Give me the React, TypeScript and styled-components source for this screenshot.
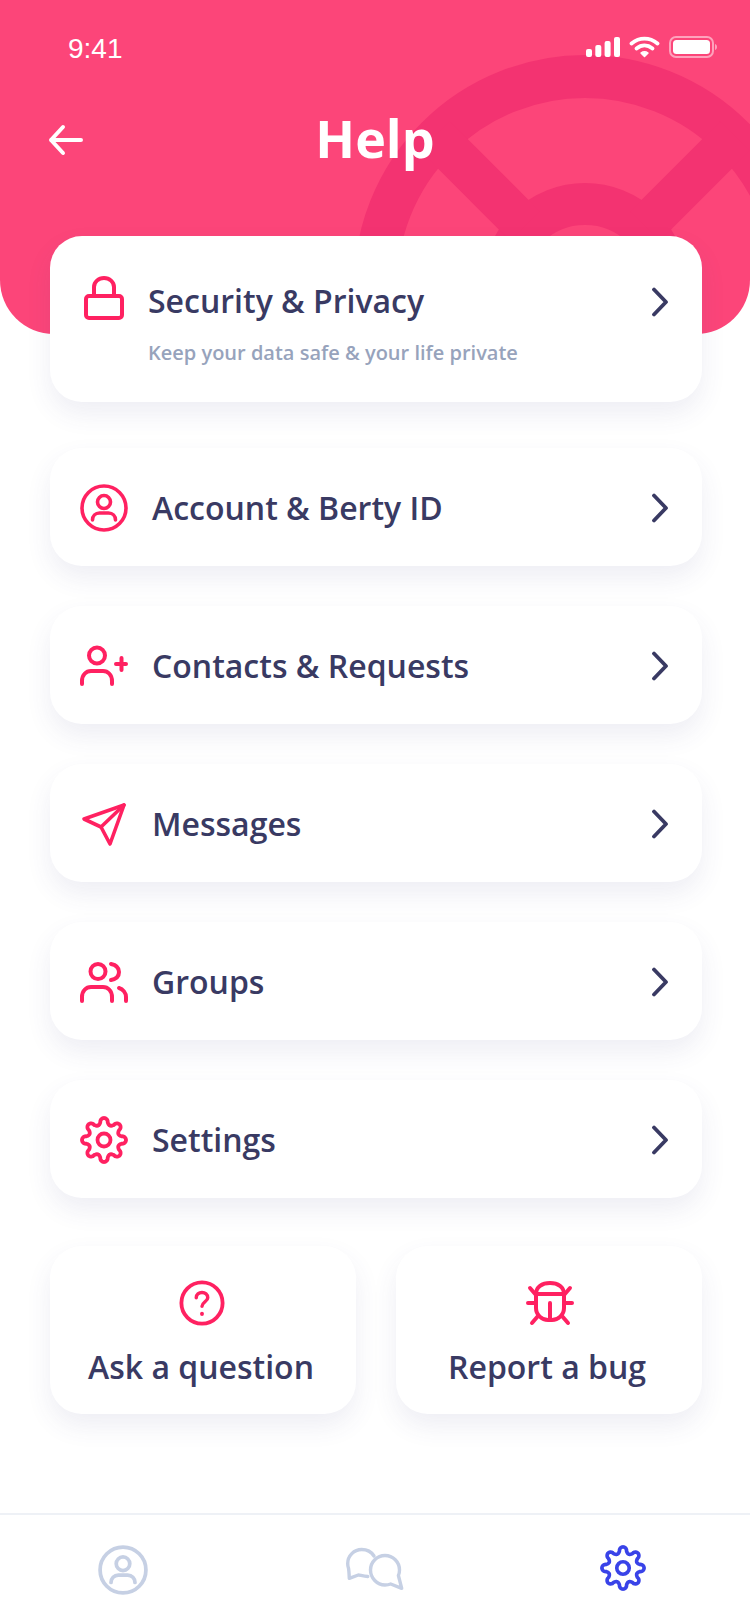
import { ReactElement, ReactNode } from 'react';
import styled, { createGlobalStyle } from 'styled-components';

const PINK = '#ff2161';
const NAVY = '#393a63';
const GREY = '#c6d0e4';
const BLUE = '#3943e8';

const GlobalStyle = createGlobalStyle`
    html, body {
        margin: 0;
        padding: 0;
        background: #fff;
    }

    * {
        box-sizing: border-box;
    }
`;

const Screen = styled.div`
    position: relative;
    display: flex;
    flex-direction: column;
    width: 750px;
    height: 1624px;
    overflow: hidden;
    background: #fff;
    font-family: 'Open Sans', 'Noto Sans', sans-serif;
    color: ${NAVY};
`;

const Header = styled.header`
    position: relative;
    flex: none;
    height: 334px;
    padding: 27px 33px 0 68px;
    overflow: hidden;
    background: #fc4579;
    border-radius: 0 0 54px 54px;
`;

const Wheel = styled.svg`
    position: absolute;
    left: 345px;
    top: 46px;
`;

const StatusBar = styled.div`
    position: relative;
    display: flex;
    align-items: center;
    justify-content: space-between;
    height: 40px;
`;

const Time = styled.span`
    padding-top: 4px;
    font-family: 'Liberation Sans', Arial, sans-serif;
    font-size: 28px;
    color: #fff;
`;

const StatusIcons = styled.div`
    display: flex;
    align-items: center;
    gap: 9px;
`;

const TitleBar = styled.div`
    position: relative;
    display: flex;
    align-items: center;
    justify-content: center;
    height: 80px;
    margin: 31px -33px 0 -68px;
`;

const BackButton = styled.span`
    position: absolute;
    left: 48px;
    top: 26px;
    display: flex;
`;

const Title = styled.h1`
    margin: 0;
    font-size: 52px;
    font-weight: 700;
    line-height: 1;
    color: #fff;
`;

const Content = styled.main`
    position: relative;
    display: flex;
    flex: 1;
    flex-direction: column;
    margin-top: -98px;
    padding: 0 48px 0 50px;
`;

const Card = styled.section`
    background: #fff;
    border-radius: 32px;
    box-shadow: 0 12px 26px rgba(62, 70, 130, 0.09);
`;

const FeatureCard = styled(Card)`
    height: 166px;
    margin-bottom: 46px;
    padding: 40px 33px 0 34px;
`;

const FeatureRow = styled.div`
    display: flex;
    align-items: center;
    height: 44px;
`;

const RowTitle = styled.span`
    flex: 1;
    margin-left: 24px;
    font-size: 32px;
    font-weight: 600;
    line-height: 44px;
    white-space: nowrap;
`;

const FeatureTitle = styled(RowTitle)`
    padding-top: 6px;
`;

const FeatureChevron = styled.span`
    display: flex;
    padding-top: 8px;
`;

const Subtitle = styled.p`
    margin: 19px 0 0 64px;
    font-size: 20px;
    font-weight: 600;
    line-height: 28px;
    color: #97a3bc;
`;

const RowList = styled.div`
    display: flex;
    flex-direction: column;
    gap: 40px;
`;

const RowCard = styled(Card)`
    display: flex;
    align-items: center;
    height: 118px;
    padding: 2px 33px 0 30px;
`;

const IconSlot = styled.span<{ $shift?: number }>`
    display: flex;
    flex: none;
    align-items: center;
    justify-content: center;
    width: 48px;
    height: 48px;
    margin-left: ${p => p.$shift ?? 0}px;
`;

const Actions = styled.div`
    display: grid;
    grid-template-columns: 306px 306px;
    gap: 40px;
    margin-top: 48px;
`;

const ActionCard = styled(Card)`
    display: flex;
    flex-direction: column;
    align-items: center;
    height: 168px;
    padding-top: 33px;
`;

const ActionLabel = styled.span`
    margin: 18px 0 0 -4px;
    font-size: 32px;
    font-weight: 600;
    line-height: 44px;
    white-space: nowrap;
`;

const TabBar = styled.nav`
    display: grid;
    flex: none;
    grid-template-columns: 246px 256px 242px;
    justify-items: center;
    height: 111px;
    padding-top: 30px;
    background: #fff;
    border-top: 2px solid #eef1f6;
`;

const Tab = styled.span`
    display: flex;
    justify-content: center;
    width: 60px;
    height: 52px;
`;

type IconProps = { color?: string; size?: number };

const Stroke = ({
    children,
    color = PINK,
    size = 48,
    width = 4,
}: IconProps & { children: ReactNode; width?: number }): ReactElement => (
    <svg
        width={size}
        height={size}
        viewBox='0 0 48 48'
        fill='none'
        stroke={color}
        strokeWidth={width}
        strokeLinecap='round'
        strokeLinejoin='round'
    >
        {children}
    </svg>
);

// eight round teeth, sampled round the circle
const gearPath = (): string => {
    const points: string[] = [];
    for (let i = 0; i < 240; i++) {
        const angle = (i / 240) * Math.PI * 2;
        const wave = Math.cos(angle * 8);
        const radius = 18.8 + 3.2 * Math.sign(wave) * Math.pow(Math.abs(wave), 0.6);
        const x = 24 + radius * Math.sin(angle);
        const y = 24 - radius * Math.cos(angle);
        points.push(`${x.toFixed(2)} ${y.toFixed(2)}`);
    }
    return `M${points.join('L')}Z`;
};

const LockIcon = () => (
    <svg width='40' height='44' viewBox='0 0 40 44' fill='none' stroke={PINK} strokeWidth='4'>
        <rect x='2' y='20' width='36' height='22' rx='3' />
        <path d='M10 20v-9a10 9 0 0 1 20 0v9' />
    </svg>
);

const AccountIcon = ({ color, size }: IconProps) => (
    <Stroke color={color} size={size} width={3.6}>
        <circle cx='24' cy='24' r='22' />
        <circle cx='24' cy='18' r='6.5' />
        <path d='M12.500 36c0-4 3-7 7-7h9c4 0 7 3 7 7' />
    </Stroke>
);

const ContactsIcon = () => (
    <Stroke>
        <circle cx='17' cy='13.500' r='8' />
        <path d='M2 42v-3c0-6 4-10 9-10h12c5 0 9 4 9 10v3' />
        <path d='M41.500 16v12M36 22h10' />
    </Stroke>
);

const PlaneIcon = () => (
    <Stroke width={3.6}>
        <path d='M44 5 4 19l17 8 9 17z' />
        <path d='M44 5 21 27' />
    </Stroke>
);

const GroupsIcon = () => (
    <Stroke>
        <circle cx='18' cy='13.500' r='7.500' />
        <path d='M2 43v-4c0-6 4-10 9-10h12c5 0 9 4 9 10v4' />
        <path d='M31 6c5 1 8 4 8 8s-3 7-8 8' />
        <path d='M39 30c4 1 7 5 7 9v4' />
    </Stroke>
);

const GearIcon = ({ color, size }: IconProps) => (
    <Stroke color={color} size={size} width={3.8}>
        <circle cx='24' cy='24' r='6.500' />
        <path d={gearPath()} />
    </Stroke>
);

const ChevronIcon = () => (
    <svg width='18' height='30' viewBox='0 0 18 30' fill='none' stroke={NAVY} strokeWidth='3.800' strokeLinecap='round' strokeLinejoin='round'>
        <path d='M3 2.500 15 15 3 27.500' />
    </svg>
);

const QuestionIcon = () => (
    <Stroke size={46}>
        <circle cx='24' cy='24' r='21.500' />
        <path d='M18 18.500c0-3.500 2.800-5.500 6-5.500s6 2 6 5.500c0 4-6 4.500-6 9' strokeWidth='3.600' />
        <path d='M24 35v.5' />
    </Stroke>
);

const BugIcon = () => (
    <Stroke>
        <path d='M10 15c0-7 6-11 14-11s14 4 14 11v14c0 7-6 12-12 12h-4c-6 0-12-5-12-12z' />
        <path d='M10 15h28M24 24v17M2 24h8M38 24h8M4 9l6 7M44 9l-6 7M6 44l6-7M42 44l-6-7' />
    </Stroke>
);

const ChatIcon = () => (
    <svg width='60' height='46' viewBox='0 0 60 46' fill='none' stroke={GREY} strokeWidth='3.400' strokeLinecap='round' strokeLinejoin='round'>
        <path d='M30 11C27.500 7 23 4.500 17.700 4.500C10 4.500 3.700 10.800 3.700 18.500c0 1.800.3 3.300.8 4.800c.4 1.500.6 6 .8 10l9-3.300c1.500 0 5 1.300 9.500 1.500' />
        <path d='M41 10.500C49 10.500 55.500 17 55.500 25c0 2-.4 4-1.100 5.500l3.300 12.800l-11-4.300c-1.700.7-3.700 1-5.700 1C33 40 26.500 33 26.500 25S33 10.500 41 10.500z' />
    </svg>
);

const WifiIcon = () => (
    <svg width='31' height='22' viewBox='0 0 31 22' fill='none' stroke='#fff' strokeWidth='3.800' strokeLinecap='round'>
        <path d='M2.500 7.500c8-6.500 18-6.500 26 0' />
        <path d='M7.500 12.500c5-4 11-4 16 0' />
        <path d='M12 17c2-1.500 5-1.500 7 0l-3.500 3.500z' fill='#fff' strokeWidth='1.500' strokeLinejoin='round' />
    </svg>
);

const SignalIcon = () => (
    <svg width='34' height='20' viewBox='0 0 34 20' fill='#fff'>
        <rect x='0' y='12' width='6' height='8' rx='2' />
        <rect x='9.300' y='8' width='6' height='12' rx='2' />
        <rect x='18.600' y='4' width='6' height='16' rx='2' />
        <rect x='28' y='0' width='6' height='20' rx='2' />
    </svg>
);

const BatteryIcon = () => (
    <svg width='48' height='22' viewBox='0 0 48 22'>
        <rect x='1' y='1' width='43' height='20' rx='6' fill='none' stroke='#fff' strokeOpacity='0.5' strokeWidth='2' />
        <rect x='4' y='4' width='37' height='14' rx='3.500' fill='#fff' />
        <path d='M46 8c1.500.5 2 1.800 2 3s-.5 2.500-2 3z' fill='#fff' fillOpacity='0.5' />
    </svg>
);

const WheelBackground = () => (
    <Wheel width='480' height='480' viewBox='0 0 480 480' fill='none' stroke='#f33371'>
        <circle cx='240' cy='240' r='209.500' strokeWidth='43' />
        <circle cx='240' cy='240' r='82' strokeWidth='42' />
        <path d='M90 90 180 180M390 90 300 180M90 390 180 300M390 390 300 300' strokeWidth='42' />
    </Wheel>
);

const rows: { label: string; icon: ReactElement }[] = [
    { label: 'Account & Berty ID', icon: <AccountIcon /> },
    { label: 'Contacts & Requests', icon: <ContactsIcon /> },
    { label: 'Messages', icon: <PlaneIcon /> },
    { label: 'Groups', icon: <GroupsIcon /> },
    { label: 'Settings', icon: <GearIcon /> },
];

export default function App(): ReactElement {
    return (
        <Screen>
            <GlobalStyle />
            <Header>
                <WheelBackground />
                <StatusBar>
                    <Time>9:41</Time>
                    <StatusIcons>
                        <SignalIcon />
                        <WifiIcon />
                        <BatteryIcon />
                    </StatusIcons>
                </StatusBar>
                <TitleBar>
                    <BackButton>
                        <svg width='36' height='32' viewBox='0 0 36 32' fill='none' stroke='#fff' strokeWidth='4' strokeLinecap='round' strokeLinejoin='round'>
                            <path d='M33 16H3M15 3 3 16l12 13' />
                        </svg>
                    </BackButton>
                    <Title>Help</Title>
                </TitleBar>
            </Header>

            <Content>
                <FeatureCard>
                    <FeatureRow>
                        <LockIcon />
                        <FeatureTitle>Security &amp; Privacy</FeatureTitle>
                        <FeatureChevron>
                            <ChevronIcon />
                        </FeatureChevron>
                    </FeatureRow>
                    <Subtitle>Keep your data safe &amp; your life private</Subtitle>
                </FeatureCard>

                <RowList>
                    {rows.map(row => (
                        <RowCard key={row.label}>
                            <IconSlot>{row.icon}</IconSlot>
                            <RowTitle>{row.label}</RowTitle>
                            <ChevronIcon />
                        </RowCard>
                    ))}
                </RowList>

                <Actions>
                    <ActionCard>
                        <IconSlot $shift={-2}>
                            <QuestionIcon />
                        </IconSlot>
                        <ActionLabel>Ask a question</ActionLabel>
                    </ActionCard>
                    <ActionCard>
                        <IconSlot $shift={2}>
                            <BugIcon />
                        </IconSlot>
                        <ActionLabel>Report a bug</ActionLabel>
                    </ActionCard>
                </Actions>
            </Content>

            <TabBar>
                <Tab>
                    <AccountIcon color={GREY} size={50} />
                </Tab>
                <Tab>
                    <ChatIcon />
                </Tab>
                <Tab>
                    <GearIcon color={BLUE} size={46} />
                </Tab>
            </TabBar>
        </Screen>
    );
}
